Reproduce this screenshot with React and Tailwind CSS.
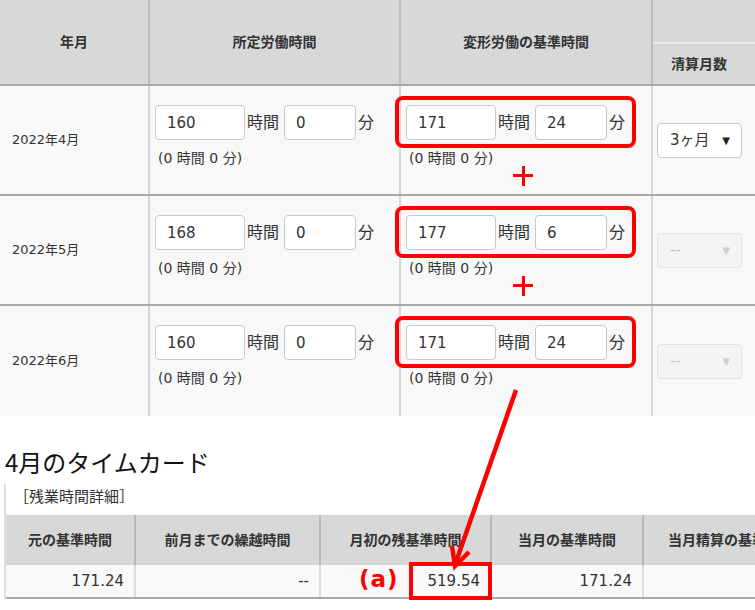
import React from 'react';

const font = { fontFamily: '"DejaVu Sans", "Noto Sans CJK JP", sans-serif' };
const cjk = { fontFamily: '"Noto Sans CJK JP", sans-serif' };

const rows = [
  { month: '2022年4月', base: ['160', '0'], flex: ['171', '24'], months: '3ヶ月', plus: true },
  { month: '2022年5月', base: ['168', '0'], flex: ['177', '6'], months: null, plus: true },
  { month: '2022年6月', base: ['160', '0'], flex: ['171', '24'], months: null, plus: false },
];

const TimeInputs = ({ h, m }) => (
  <div>
    <div className="flex items-center text-[#333]">
      <input
        readOnly
        value={h}
        className="w-[90px] h-[35px] bg-white border border-[#c8c8c8] rounded-[4px] pl-[11px] text-[15px] text-[#333] outline-none"
      />
      <span className="ml-[2px] mr-[5px] text-[16px]">時間</span>
      <input
        readOnly
        value={m}
        className="w-[72px] h-[35px] bg-white border border-[#c8c8c8] rounded-[4px] pl-[11px] text-[15px] text-[#333] outline-none"
      />
      <span className="ml-[2px] text-[16px]">分</span>
    </div>
    <div className="mt-[8px] pl-[3px] text-[14px] leading-[20px] text-[#333]">(0 時間 0 分)</div>
  </div>
);

const Plus = () => (
  <div className="absolute left-[112px] top-[80px] w-[20px] h-[20px]">
    <div className="absolute left-0 top-[8px] w-[20px] h-[3px] bg-[#ff0000]" />
    <div className="absolute left-[8.5px] top-0 w-[3px] h-[20px] bg-[#ff0000]" />
  </div>
);

const Select = ({ value }) =>
  value ? (
    <div className="w-[85px] h-[35px] bg-white border border-[#c8c8c8] rounded-[4px] flex items-center justify-between pl-[12px] pr-[11px]">
      <span className="text-[15px] text-[#333]">{value}</span>
      <span className="text-[10px] text-[#222]">▼</span>
    </div>
  ) : (
    <div className="w-[85px] h-[35px] bg-[#f4f4f4] border border-[#e2e2e2] rounded-[4px] flex items-center justify-between pl-[12px] pr-[11px]">
      <span className="text-[15px] text-[#c4c4c4]">--</span>
      <span className="text-[10px] text-[#d0d0d0]">▼</span>
    </div>
  );

const App = () => {
  return (
    <div className="relative w-[755px] h-[610px] overflow-hidden bg-white" style={font}>
      {/* ── top table ── */}
      <div className="w-[755px]">
        <div className="flex h-[86px] bg-[#d7d8d8] border-b-2 border-[#a9a9a9] text-[14px] font-bold text-[#333]">
          <div className="w-[150px] shrink-0 border-r-2 border-[#bcbcbc] flex items-center justify-center">年月</div>
          <div className="w-[251px] shrink-0 border-r-2 border-[#bcbcbc] flex items-center justify-center">所定労働時間</div>
          <div className="w-[252px] shrink-0 border-r-2 border-[#bcbcbc] flex items-center justify-center">変形労働の基準時間</div>
          <div className="flex-1 flex flex-col">
            <div className="h-[44px] border-b-2 border-[#ececec]" />
            <div className="flex-1 flex items-center justify-center pr-[10px]">清算月数</div>
          </div>
        </div>

        {rows.map((r, i) => (
          <div
            key={r.month}
            className={`flex h-[110px] bg-[#f8f8f8] ${i < rows.length - 1 ? 'border-b-2 border-[#aaaaaa]' : ''}`}
          >
            <div className="w-[150px] shrink-0 border-r-2 border-[#d6d6d6] flex items-center pl-[12px] text-[13px] text-[#333]">
              {r.month}
            </div>
            <div className="w-[251px] shrink-0 border-r-2 border-[#d6d6d6] pl-[5px] pt-[19px]">
              <TimeInputs h={r.base[0]} m={r.base[1]} />
            </div>
            <div className="relative w-[252px] shrink-0 border-r-2 border-[#d6d6d6] pl-[5px] pt-[19px]">
              <TimeInputs h={r.flex[0]} m={r.flex[1]} />
              <div className="absolute left-[-6px] top-[10px] w-[241px] h-[52px] border-[4px] border-[#ff0000] rounded-[8px]" />
              {r.plus && <Plus />}
            </div>
            <div className="flex-1 flex items-center pl-[4px]">
              <Select value={r.months} />
            </div>
          </div>
        ))}
      </div>

      {/* ── time card ── */}
      <h2 className="mt-[30px] pl-[5px] text-[24px] leading-[32px] font-normal text-[#111]" style={cjk}>
        4月のタイムカード
      </h2>
      <div className="ml-[4px] mt-[6px] border-l-2 border-[#dedede] pt-[2px]">
        <div className="pl-[8px] text-[15px] leading-[20px] text-[#333]" style={cjk}>［残業時間詳細］</div>
        <div className="mt-[9px] text-[#333]">
          <div className="flex h-[50px] bg-[#d7d8d8] text-[14px] font-bold">
            <div className="w-[130px] shrink-0 border-r-2 border-[#b8b8b8] flex items-center justify-center">元の基準時間</div>
            <div className="w-[185px] shrink-0 border-r-2 border-[#b8b8b8] flex items-center justify-center">前月までの繰越時間</div>
            <div className="w-[171px] shrink-0 border-r-2 border-[#b8b8b8] flex items-center justify-center">月初の残基準時間</div>
            <div className="w-[152px] shrink-0 border-r-2 border-[#b8b8b8] flex items-center justify-center">当月の基準時間</div>
            <div className="flex-1 flex items-center pl-[24px] whitespace-nowrap overflow-hidden">当月精算の基準時間</div>
          </div>
          <div className="flex h-[34px] bg-[#f9f9f9] border-b-2 border-[#aaaaaa] text-[15px]">
            <div className="w-[130px] shrink-0 border-r-2 border-[#dcdcdc] flex items-center justify-end pr-[10px]">171.24</div>
            <div className="w-[185px] shrink-0 border-r-2 border-[#dcdcdc] flex items-center justify-end pr-[10px]">--</div>
            <div className="relative w-[171px] shrink-0 border-r-2 border-[#dcdcdc] flex items-center justify-end pr-[10px]">
              519.54
              <span className="absolute left-[38px] top-[-3px] text-[23px] font-bold text-[#ff0000] tracking-[1px]">(a)</span>
              <div className="absolute left-[88px] top-[-3px] w-[83px] h-[38px] border-[4px] border-[#ff0000]" />
            </div>
            <div className="w-[152px] shrink-0 border-r-2 border-[#dcdcdc] flex items-center justify-end pr-[10px]">171.24</div>
            <div className="flex-1" />
          </div>
        </div>
      </div>

      {/* ── arrow ── */}
      <svg className="absolute left-0 top-0 pointer-events-none" width="755" height="610">
        <line x1="516" y1="390" x2="456" y2="562" stroke="#ff0000" strokeWidth="4.5" />
        <polyline points="452,546 455,566 469,552" fill="none" stroke="#ff0000" strokeWidth="4.5" strokeLinejoin="miter" />
      </svg>
    </div>
  );
};

export default App;
